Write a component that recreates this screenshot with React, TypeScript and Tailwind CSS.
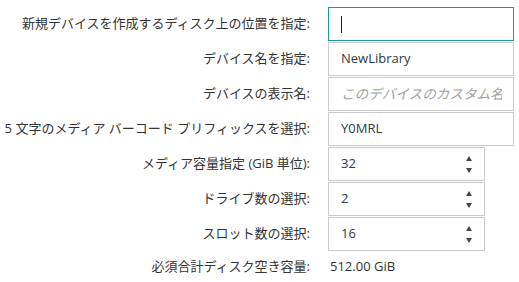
const rows: { label: string; value?: string; placeholder?: string; focused?: boolean; spin?: boolean }[] = [
  { label: '新規デバイスを作成するディスク上の位置を指定:', value: '', focused: true },
  { label: 'デバイス名を指定:', value: 'NewLibrary' },
  { label: 'デバイスの表示名:', placeholder: 'このデバイスのカスタム名' },
  { label: '5 文字のメディア バーコード プリフィックスを選択:', value: 'Y0MRL' },
  { label: 'メディア容量指定 (GiB 単位):', value: '32', spin: true },
  { label: 'ドライブ数の選択:', value: '2', spin: true },
  { label: 'スロット数の選択:', value: '16', spin: true },
];

function Spinner() {
  return (
    <div className="absolute right-[13px] top-0 h-full flex flex-col justify-center gap-[7px] text-[#444]">
      <svg width="6" height="5" viewBox="0 0 6 5"><path d="M3 0L6 5H0z" fill="currentColor" /></svg>
      <svg width="6" height="5" viewBox="0 0 6 5"><path d="M0 0h6L3 5z" fill="currentColor" /></svg>
    </div>
  );
}

export default function App() {
  return (
    <div
      className="w-[519px] h-[282px] bg-white pt-[7px] text-[13px] text-[#333]"
      style={{ fontFamily: '"Open Sans", "Noto Sans CJK JP", sans-serif' }}
    >
      <div className="grid grid-cols-[310px_1fr] gap-x-[18px] gap-y-px">
        {rows.map((r) => (
          <div key={r.label} className="contents">
            <div className="h-[34px] flex items-center justify-end whitespace-nowrap">{r.label}</div>
            <div className={`relative h-[34px] ${r.spin ? 'w-[157px]' : 'w-[186px]'}`}>
              <div
                className={`h-full border flex items-center pl-[12px] pr-[11px] ${
                  r.focused ? 'border-[#1a9aa0]' : 'border-[#cccccc]'
                }`}
              >
                {r.focused && <span className="w-px h-[17px] bg-[#222]" />}
                {r.value && <span className="text-[#2d3a4a]">{r.value}</span>}
                {r.placeholder && (
                  <span className="min-w-0 overflow-hidden italic text-[13.6px] text-[#a0a0a0] whitespace-nowrap">
                    {r.placeholder}
                  </span>
                )}
              </div>
              {r.spin && <Spinner />}
            </div>
          </div>
        ))}
        <div className="h-[30px] flex items-center justify-end whitespace-nowrap">必須合計ディスク空き容量:</div>
        <div className="h-[30px] flex items-center pl-[2px]">512.00 GiB</div>
      </div>
    </div>
  );
}
